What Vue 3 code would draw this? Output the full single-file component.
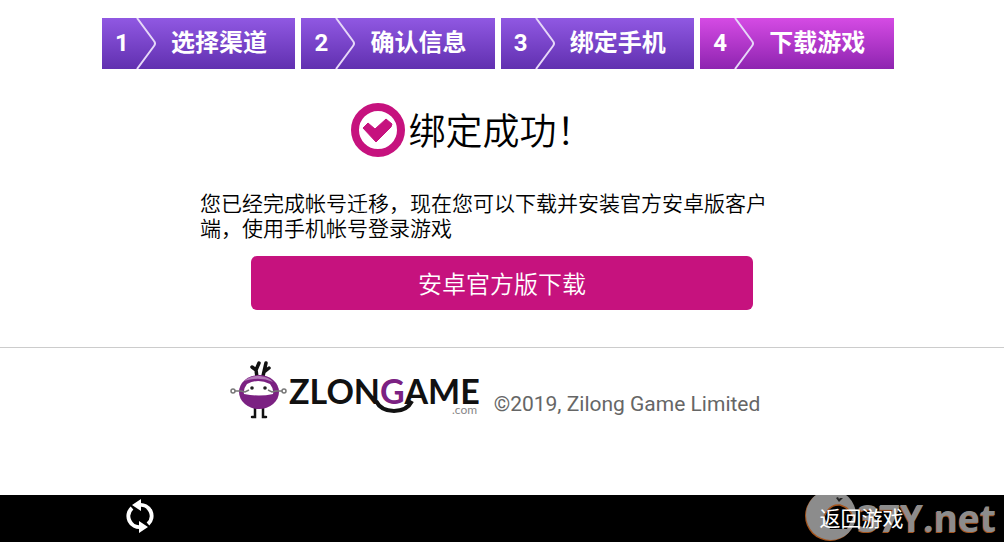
<script setup>
const steps = ['选择渠道', '确认信息', '绑定手机', '下载游戏']
const current = 3
</script>

<template>
  <div class="page">
    <ol class="steps">
      <li v-for="(step, i) in steps" :key="step" class="step" :class="{ active: i === current }">
        <span class="num">{{ i + 1 }}</span>
        <svg class="chevron" viewBox="0 0 20 51" aria-hidden="true">
          <path d="M1 0 L18 23 Q20 25.500 18 28 L1 51" />
        </svg>
        <span class="label">{{ step }}</span>
      </li>
    </ol>

    <main>
      <h1 class="title">
        <svg class="tick" viewBox="0 0 54 54" aria-hidden="true">
          <circle cx="27" cy="27" r="23" fill="none" stroke="#c6127e" stroke-width="8" />
          <path d="M12 25 L17 20 L24 26 L35 16 L41 21 L40 24 L25 39 Z" fill="#c6127e" stroke="#c6127e" stroke-width="1" stroke-linejoin="round" />
        </svg>
        <span class="title-text">绑定成功！</span>
      </h1>
      <p class="message">您已经完成帐号迁移，现在您可以下载并安装官方安卓版客户端，使用手机帐号登录游戏</p>
      <button type="button" class="download">安卓官方版下载</button>
    </main>

    <footer class="footer">
      <svg class="logo" viewBox="0 0 250 60" role="img" aria-label="ZLONGAME.com">
        <g fill="none" stroke="#111" stroke-linecap="round">
          <path d="M27 17 L26 10 L22 7 M26 10 L29 3 M33 16 L36 3 M34 12 L39 8" stroke-width="3.500" />
          <path d="M25 46 V57 H22 M33 46 V57 H36" stroke-width="2.500" />
        </g>
        <ellipse cx="29" cy="32" rx="20" ry="17" fill="#7b2182" />
        <path d="M14 21 Q21 15 30 16 Q39 17 43 22 Q30 16 14 21Z" fill="#b27ab8" />
        <path d="M14 34 Q13 29 17 24 Q28 18 40 24 Q44 29 43 34 Q29 37 14 34Z" fill="#fff" />
        <g fill="none" stroke="#777" stroke-width="1.500">
          <path d="M5 31 H11 L15 32 L19 30 M52 31 H46 L42 32 L38 30" />
          <circle cx="3" cy="31" r="2" />
          <circle cx="54" cy="31" r="2" />
        </g>
        <circle cx="22" cy="28" r="1.800" fill="#222" />
        <circle cx="35" cy="28" r="1.800" fill="#222" />
        <text class="word" x="59" y="44">ZLON<tspan fill="#7b2182">G</tspan>AME</text>
        <path d="M146 41 Q151 51 164 51 Q177 51 182 41" fill="none" stroke="#111" stroke-width="4" />
        <text class="com" x="222" y="54">.com</text>
      </svg>
      <span class="copyright">©2019, Zilong Game Limited</span>
    </footer>

    <nav class="bar">
      <button type="button" class="refresh" aria-label="刷新">
        <svg viewBox="0 0 28 34" aria-hidden="true">
          <g fill="none" stroke="#fff" stroke-width="4">
            <path d="M13 6 A11 11 0 0 1 22 25" />
            <path d="M15 28 A11 11 0 0 1 6 9" />
          </g>
          <path d="M15 0 V12 L6 6Z M13 22 V34 L22 28Z" fill="#fff" />
        </svg>
      </button>
      <button type="button" class="back">返回游戏</button>
      <div class="watermark" aria-hidden="true">
        <svg viewBox="0 0 54 54">
          <circle cx="26" cy="28" r="25" fill="#a5541c" />
          <circle cx="27" cy="27" r="25" fill="#8c8c8c" />
          <path d="M20 29 Q25 16 36 17 Q46 20 49 29 L43 41 H26Z" fill="#000" />
          <path d="M20 29 Q25 16 36 17 Q46 20 49 29" fill="none" stroke="#a5541c" stroke-width="1.500" />
          <path d="M32 10 L35 14 L39 10 L36 10 L35 11 L34 9Z" fill="#222" />
        </svg>
        <span class="mark-text">37Y.net</span>
      </div>
    </nav>
  </div>
</template>

<style>
body {
  margin: 0;
  background: #fff;
}
</style>

<style scoped>
.page {
  display: flex;
  flex-direction: column;
  min-height: 100vh;
  font-family: Roboto, "Noto Sans CJK SC", sans-serif;
  color: #000;
}
button {
  border: 0;
  padding: 0;
  font-family: inherit;
  color: #fff;
  cursor: pointer;
}
.steps {
  display: grid;
  grid-template-columns: repeat(4, 1fr);
  gap: 6px;
  margin: 18px 11% 0 102px;
  padding: 0;
  list-style: none;
}
.step {
  display: flex;
  align-items: center;
  height: 51px;
  color: #fff;
  font-size: 24px;
  font-weight: 700;
  line-height: 49px;
  background: linear-gradient(#9058e2, #6130b0);
}
.step.active {
  background: linear-gradient(#d54be4, #8e24b0);
}
.num {
  width: 34px;
  padding-left: 13px;
  box-sizing: border-box;
}
.chevron {
  width: 20px;
  height: 51px;
  fill: none;
  stroke: #e6d8f8;
  stroke-width: 2;
}
.label {
  margin-left: 15px;
}
.title {
  display: flex;
  align-items: center;
  justify-content: center;
  gap: 4px;
  margin: 33px 0 0;
  padding-right: 60px;
  font-size: 37px;
  line-height: 50px;
  font-weight: 350;
}
.title-text {
  padding-top: 6px;
}
.tick {
  width: 54px;
  height: 54px;
}
.message {
  width: 604px;
  max-width: 100%;
  margin: 34px auto 0;
  font-size: 21px;
  line-height: 25px;
  font-weight: 350;
}
.download {
  display: block;
  width: 50%;
  height: 54px;
  margin: 14px auto 0;
  padding-bottom: 2px;
  border-radius: 6px;
  background: #c6127e;
  font-size: 24px;
  font-weight: 350;
}
.footer {
  display: flex;
  justify-content: center;
  align-items: flex-start;
  gap: 14px;
  margin-top: 37px;
  padding: 12px 14px 0 0;
  border-top: 1px solid #ccc;
}
.logo {
  width: 250px;
  height: 60px;
}
.word {
  font: 700 34px Lato, sans-serif;
  fill: #111;
}
.com {
  font: 12px Lato, sans-serif;
  fill: #888;
}
.copyright {
  margin-top: 32px;
  font-size: 21px;
  line-height: 25px;
  color: #666;
}
.bar {
  position: relative;
  display: flex;
  align-items: center;
  justify-content: space-between;
  box-sizing: border-box;
  height: 47px;
  margin-top: auto;
  padding: 0 10% 5px 126px;
  background: #000;
  overflow: hidden;
}
.refresh {
  height: 34px;
  background: none;
}
.refresh svg {
  display: block;
  width: 28px;
  height: 34px;
}
.back {
  position: relative;
  z-index: 1;
  padding-top: 2px;
  background: none;
  font-size: 21px;
  font-weight: 400;
}
.watermark {
  position: absolute;
  right: 8px;
  bottom: 0;
  display: flex;
  align-items: center;
  color: #8c8c8c;
  font: 700 37px/40px "Open Sans", sans-serif;
  text-shadow: -1px 1px #a5541c;
}
.mark-text {
  padding-top: 6px;
}
.watermark svg {
  width: 54px;
  height: 54px;
}
</style>
